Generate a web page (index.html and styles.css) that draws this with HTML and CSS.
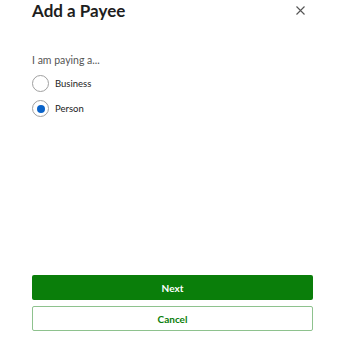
FILE: index.html
```html
<!DOCTYPE html>
<html>
<head>
<meta charset="utf-8">
<link rel="stylesheet" href="styles.css">
</head>
<body>
<div class="dialog">
  <div class="header">
    <h1 class="title">Add a Payee</h1>
    <button class="close" aria-label="Close">
      <svg width="9" height="9" viewBox="0 0 9 9"><path d="M0.5 0.5L8.5 8.5M8.5 0.5L0.5 8.5" stroke="#555" stroke-width="1.1" fill="none"/></svg>
    </button>
  </div>
  <div class="content">
    <p class="label">I am paying a...</p>
    <label class="option"><span class="radio"></span><span class="opt-text">Business</span></label>
    <label class="option"><span class="radio checked"></span><span class="opt-text">Person</span></label>
  </div>
  <div class="actions">
    <button class="btn primary">Next</button>
    <button class="btn secondary">Cancel</button>
  </div>
</div>
</body>
</html>
```
FILE: styles.css
```css
html, body {
  margin: 0;
  padding: 0;
  background: #fff;
}
body {
  font-family: "Lato", "Open Sans", sans-serif;
  color: #222;
}
.dialog {
  width: 340px;
  height: 340px;
  box-sizing: border-box;
  padding: 0 27px 0 32px;
  display: flex;
  flex-direction: column;
}
.header {
  display: flex;
  justify-content: space-between;
  align-items: center;
  height: 22px;
}
.title {
  margin: 0;
  font-size: 17px;
  font-weight: 700;
  color: #1e1e1e;
  line-height: 22px;
}
.close {
  border: 0;
  background: none;
  padding: 0;
  margin-right: 8px;
  margin-top: -1px;
  width: 9px;
  height: 9px;
  display: flex;
}
.content {
  flex: 1;
  padding-top: 30px;
}
.label {
  margin: 0 0 3px;
  font-size: 10.5px;
  color: #555;
  line-height: 16px;
}
.option {
  display: flex;
  align-items: center;
  height: 25px;
  gap: 6px;
  font-size: 9.5px;
  color: #222;
}
.radio {
  width: 15px;
  height: 15px;
  border: 1px solid #a0a0a0;
  border-radius: 50%;
  box-sizing: content-box;
  display: flex;
  align-items: center;
  justify-content: center;
}
.radio.checked::after {
  content: "";
  width: 8px;
  height: 8px;
  border-radius: 50%;
  background: #0a63c9;
}
.actions {
  display: flex;
  flex-direction: column;
  gap: 6px;
  padding-bottom: 9px;
}
.btn {
  height: 25px;
  border-radius: 2px;
  font-family: "Lato", "Open Sans", sans-serif;
  font-weight: 700;
  font-size: 10px;
  width: 281px;
}
.primary {
  background: #0a7e0a;
  border: 0;
  color: #fff;
}
.secondary {
  background: #fff;
  border: 1px solid #8ec28e;
  color: #0a7e0a;
}
```
